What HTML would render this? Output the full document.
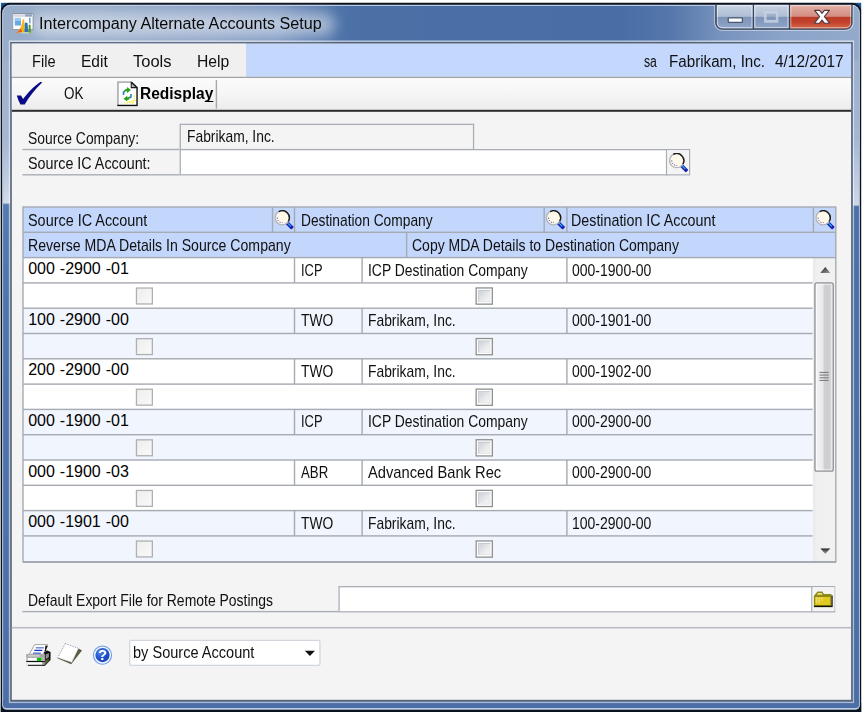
<!DOCTYPE html>
<html><head><meta charset="utf-8"><title>Intercompany Alternate Accounts Setup</title>
<style>
*{box-sizing:border-box;margin:0;padding:0}
html,body{width:862px;height:712px;overflow:hidden;background:#fff}
body{position:relative;font-family:"Liberation Sans",sans-serif;color:#101010}
#root{position:absolute;left:0;top:0;width:8620px;height:7120px;transform:scale(0.1);transform-origin:0 0}
#root div,#root span,#root svg{position:absolute}
#tl{position:absolute;left:0;top:0;width:862px;height:712px}
#tl span{position:absolute}
.t{white-space:pre;transform-origin:0 50%;color:#101010}
.t u{text-decoration-skip-ink:none;text-underline-offset:1.5px}

.ck{border:13.3px solid #b0b0b0;background:linear-gradient(135deg,#eeeeee,#f9f9f9)}
.ck2{border:13.3px solid #8e8f8f;background:#fff}
.ck2 i{position:absolute;left:13.3px;top:13.3px;right:13.3px;bottom:13.3px;background:linear-gradient(135deg,#cdd1d9 0%,#e2e4e8 45%,#f7f7f7 100%);border:13.3px solid #c6cad2;border-right-color:#e6e7ea;border-bottom-color:#e6e7ea}

</style></head><body><div id="root">
<div style="left:9px;top:28px;width:90px;height:90px;background:linear-gradient(135deg,#1e5f98,#0d2c4a)"></div>
<div style="left:8522px;top:28px;width:90px;height:90px;background:linear-gradient(225deg,#1e5f98,#0d2c4a)"></div>
<div style="left:8522px;top:7030px;width:90px;height:90px;background:#0d3556"></div>
<div style="left:9px;top:7030px;width:90px;height:90px;background:#0d3556"></div>
<div style="left:7px;top:28px;width:8605px;height:7112px;background:#0a121e;border-radius:93.3px 93.3px 0 0"></div>
<div style="left:21px;top:48px;width:8578px;height:7050px;background:#bccbe4;border-radius:80px 80px 46.7px 46.7px"></div>
<div style="left:32px;top:61px;width:8557px;height:7020px;border-radius:66.7px 66.7px 33.3px 33.3px;background:linear-gradient(90deg,#98adca 0%,#95abc9 11%,#899fc5 26%,#7b97c0 32%,#6080b2 36%,#4e73a8 39%,#4a70a6 42%,#486ea5 72%,#5577ab 78%,#7893bd 84%,#8aa3c7 91%,#93aacc 100%)"></div>
<div style="left:32px;top:600px;width:70px;height:6460px;background:linear-gradient(180deg,#9fb1cd 0,#a4b6d1 12%,#bccadf 18%,#d3dcea 22.1%,#557aae 22.4%,#4f74aa 40%,#4b6fa6 100%)"></div>
<div style="left:8530px;top:600px;width:59px;height:6460px;background:linear-gradient(180deg,#9cb1cf 0,#a3b7d3 12%,#bccadf 18%,#ccd7e8 22.4%,#4c71a9 22.7%,#4a6ea6 100%)"></div>
<div style="left:32px;top:7000px;width:8557px;height:81px;background:#4a6ea5;border-radius:0 0 33.3px 33.3px"></div>
<div style="left:88px;top:404px;width:8453px;height:6627px;background:rgba(255,255,255,.55)"></div>
<div style="left:102px;top:420px;width:8426px;height:6597px;background:#54627a"></div>
<div style="left:118px;top:437px;width:8393px;height:6561px;background:#f4f4f4"></div>
<div style="left:118px;top:437px;width:8393px;height:332px;background:#c4d7fc"></div>
<div style="left:118px;top:437px;width:2342px;height:332px;background:#f0f0f0"></div>
<div style="left:118px;top:768.3px;width:8393px;height:13.3px;background:#a2a3a2"></div>
<div style="left:118px;top:781px;width:8393px;height:320px;background:linear-gradient(180deg,#fbfbfb 0%,#f7f7f7 40%,#ececec 100%)"></div>
<div style="left:118px;top:1098px;width:8393px;height:20px;background:#2e2e2e"></div>
<div style="left:320px;top:135px;width:3030px;height:220px;background:rgba(255,255,255,.5);border-radius:106.7px;filter:blur(69.3px)"></div>
<div style="left:7139px;top:49px;width:1400px;height:262px;background:rgba(255,255,255,.42);border-radius:0 0 86.7px 86.7px"></div>
<div style="left:7152px;top:49px;width:1374px;height:249px;background:#36425a;border-radius:0 0 73.3px 73.3px"></div>
<div style="left:7167px;top:49px;width:360px;height:235px;border-radius:0 0 0 53.3px;background:linear-gradient(180deg,#c8d3e3 0%,#afbed5 49%,#7d94b8 51%,#8ea6c8 100%);box-shadow:inset 0 0 0 13.3px rgba(255,255,255,.5)"></div>
<div style="left:7541px;top:49px;width:346px;height:235px;background:linear-gradient(180deg,#c8d3e3 0%,#afbed5 49%,#7d94b8 51%,#8ea6c8 100%);box-shadow:inset 0 0 0 13.3px rgba(255,255,255,.5)"></div>
<div style="left:7901px;top:49px;width:612px;height:235px;border-radius:0 0 53.3px 0;background:linear-gradient(180deg,#e4b1a8 0%,#d38c80 49%,#bb3a27 51%,#c4432c 75%,#d4694c 100%);box-shadow:inset 0 0 0 13.3px rgba(255,255,255,.42)"></div>
<div style="left:7276px;top:172px;width:154px;height:58px;background:#fff;border:13.3px solid #4a5872;border-radius:13.3px"></div>
<div style="left:7640px;top:105px;width:144px;height:122px;border:26.7px solid #c6d1e3;border-top-width:32px;background:rgba(130,152,188,.5);opacity:.85"></div>
<svg style="left:8120px;top:90px;width:200px;height:160px" viewBox="0 0 20 16"><path d="M2.600 1.400h5l2.400 3 2.400-3h5l-5 6.200 5.200 6.600h-5.200l-2.400-3.200-2.400 3.200H2.400l5.200-6.600z" fill="#fff" stroke="#4e3a40" stroke-width="1.100" stroke-linejoin="round"/></svg>
<svg style="left:122px;top:127px;width:220px;height:225px" viewBox="0 0 22 22.5"><rect x="0.5" y="0.8" width="20.4" height="16.2" fill="#fdfdfd" stroke="#8f949c" stroke-width="1"/><rect x="1.2" y="1.5" width="19" height="2.6" fill="#d5dae2"/><rect x="13" y="1.6" width="6.8" height="2.2" fill="#8ea0c0"/><rect x="2.6" y="5.2" width="6.2" height="7.6" fill="#6aa6e0"/><rect x="2.6" y="5.2" width="6.2" height="3" fill="#9ccaf0"/><rect x="16.8" y="5" width="1.6" height="5.6" fill="#6aa6e0"/><path d="M3.6 20.2C8 18.6 9.6 13 10.6 6.6h1.4l.4 12.6z" fill="#f7b611"/><path d="M3.6 20.2c2.6-.9 4.2-2.6 5.2-4.8l1 4.2z" fill="#e8561c"/><path d="M12.4 19.4V11c.6-1.6 2.4-1.800 3-.2l.6 8.800z" fill="#2e74b5"/><path d="M16.2 20.6l.4-8c.3-1 1.500-1 1.700 0l.4 8.600z" fill="#4f9a1c"/><path d="M3.6 20.2l9-1 6 .6-.2 1.200z" fill="#cfe6b0" opacity=".8"/></svg>
<svg style="left:150px;top:800px;width:300px;height:270px" viewBox="0 0 30 27"><path d="M1.800 15.600L6 15.400L8.200 19C12.500 13 19 6 25.700 1.700L27.200 2.600C20.500 9 14 17 9.700 24.400L5.400 24.400L3.300 20z" fill="#0a0a86"/></svg>
<svg style="left:1165px;top:812px;width:223px;height:254px" viewBox="0 0 21.5 24.5" preserveAspectRatio="none"><path d="M1.400 .8H14.200L19.800 6.200V23.400H1.400z" fill="#fff"/><path d="M1.400 23.400V.8H14.200" fill="none" stroke="#9c9c9c" stroke-width="1.300"/><path d="M14.200 .8L19.800 6.200V23.400H.8" fill="none" stroke="#0c0c0c" stroke-width="1.300"/><path d="M14.200 1.200V6.200H19.600z" fill="#b8b8b8" stroke="#1a1a1a" stroke-width="1"/><path d="M10.200 5.600l3.600 2.800-3.600 2.900V9.600c-1.400 0-2.500.5-3 1.400 0-2.400 1.200-3.700 3-3.800z" fill="#27a016"/><path d="M10.400 19.700l-3.600-2.800 3.600-2.900v1.700c1.400 0 2.500-.5 3-1.400 0 2.400-1.200 3.700-3 3.800z" fill="#27a016"/><path d="M6.800 13.200V10.400l1.400-.8" fill="none" stroke="#2a82aa" stroke-width="1.500"/><path d="M14 12.400v2.800l-1.400.8" fill="none" stroke="#2a82aa" stroke-width="1.500"/><path d="M16.600 14.400h1.200M16.800 17h1.200M15.200 18.800h1.200m1 0h1M11.500 19.600h1.200m1 0h1.200M7.600 21h1.200m1.200 0h1.200m1.300 0h1.200m1.200 0h1.200M16 20h1" stroke="#f2f020" stroke-width="1.200"/></svg>
<div style="left:2157.3px;top:800px;width:13.3px;height:286px;background:#a9a9a9"></div>
<div style="left:224px;top:1488.3px;width:1576px;height:13.3px;background:#a9adb5"></div>
<div style="left:224px;top:1741.3px;width:1576px;height:13.3px;background:#a9adb5"></div>
<div style="left:1796px;top:1237px;width:2946px;height:265px;border:13.3px solid #a9adb5;background:#f4f4f4"></div>
<div style="left:1796px;top:1490px;width:5106px;height:265px;border:13.3px solid #a9adb5;background:#fff"></div>
<div style="left:6659.3px;top:1490px;width:13.3px;height:264px;background:#a9adb5"></div>
<div style="left:6673px;top:1503px;width:216px;height:238px;background:#f4f4f4"></div>
<svg style="left:6690px;top:1529px;width:195px;height:195px" viewBox="0 0 19.5 19.5"><path d="M12 12.200l4.800 4.800" stroke="#1c1cb4" stroke-width="3.600" stroke-linecap="square"/><path d="M12.800 12.600l3.600 3.600" stroke="#22c0e8" stroke-width="1.200"/><circle cx="7.700" cy="7.700" r="7.100" fill="#fff9ea" stroke="#b4b4b4" stroke-width="1.300"/><path d="M4.300 1.500A7.100 7.100 0 0 1 13.900 11.200" fill="none" stroke="#1a1a1a" stroke-width="1.400"/><path d="M2.700 7.500l.3 2.200 1.600 2 2 .9 1.600-.1" fill="none" stroke="#5a5ad8" stroke-width="1" stroke-dasharray="1.300 1.300"/></svg>
<div style="left:230px;top:2070px;width:8128px;height:506px;background:#c3d6fc"></div>
<div style="left:230px;top:2576px;width:8128px;height:3044px;background:#fff"></div>
<div style="left:230px;top:3082px;width:7904px;height:506px;background:#f1f5fd"></div>
<div style="left:230px;top:4094px;width:7904px;height:506px;background:#f1f5fd"></div>
<div style="left:230px;top:5106px;width:7904px;height:514px;background:#f1f5fd"></div>
<div style="left:8130px;top:2576px;width:228px;height:3044px;background:linear-gradient(90deg,#e9e9ea 0,#f0f0f0 40px,#f1f1f1 100%)"></div>
<div style="left:230px;top:2063.3px;width:8128px;height:13.3px;background:#a6aab2"></div>
<div style="left:230px;top:2316.3px;width:8128px;height:13.3px;background:#a6aab2"></div>
<div style="left:230px;top:2569.3px;width:8128px;height:13.3px;background:#a6aab2"></div>
<div style="left:230px;top:2822.3px;width:7896px;height:13.3px;background:#a6aab2"></div>
<div style="left:230px;top:3075.3px;width:7896px;height:13.3px;background:#a6aab2"></div>
<div style="left:230px;top:3328.3px;width:7896px;height:13.3px;background:#a6aab2"></div>
<div style="left:230px;top:3581.3px;width:7896px;height:13.3px;background:#a6aab2"></div>
<div style="left:230px;top:3834.3px;width:7896px;height:13.3px;background:#a6aab2"></div>
<div style="left:230px;top:4087.3px;width:7896px;height:13.3px;background:#a6aab2"></div>
<div style="left:230px;top:4340.3px;width:7896px;height:13.3px;background:#a6aab2"></div>
<div style="left:230px;top:4593.3px;width:7896px;height:13.3px;background:#a6aab2"></div>
<div style="left:230px;top:4846.3px;width:7896px;height:13.3px;background:#a6aab2"></div>
<div style="left:230px;top:5099.3px;width:7896px;height:13.3px;background:#a6aab2"></div>
<div style="left:230px;top:5352.3px;width:7896px;height:13.3px;background:#a6aab2"></div>
<div style="left:230px;top:5610px;width:8128px;height:20px;background:#a6aab2"></div>
<div style="left:223.3px;top:2064px;width:13.3px;height:3562px;background:#a6aab2"></div>
<div style="left:8351.3px;top:2064px;width:13.3px;height:3562px;background:#a6aab2"></div>
<div style="left:2718.3px;top:2070px;width:13.3px;height:253px;background:#a6aab2"></div>
<div style="left:2938.3px;top:2070px;width:13.3px;height:253px;background:#a6aab2"></div>
<div style="left:5435.3px;top:2070px;width:13.3px;height:253px;background:#a6aab2"></div>
<div style="left:5662.3px;top:2070px;width:13.3px;height:253px;background:#a6aab2"></div>
<div style="left:8127.3px;top:2070px;width:13.3px;height:253px;background:#a6aab2"></div>
<div style="left:4059.3px;top:2323px;width:13.3px;height:253px;background:#a6aab2"></div>
<svg style="left:2745px;top:2101px;width:195px;height:195px" viewBox="0 0 19.5 19.5"><path d="M12 12.200l4.800 4.800" stroke="#1c1cb4" stroke-width="3.600" stroke-linecap="square"/><path d="M12.800 12.600l3.600 3.600" stroke="#22c0e8" stroke-width="1.200"/><circle cx="7.700" cy="7.700" r="7.100" fill="#fff9ea" stroke="#b4b4b4" stroke-width="1.300"/><path d="M4.300 1.500A7.100 7.100 0 0 1 13.900 11.200" fill="none" stroke="#1a1a1a" stroke-width="1.400"/><path d="M2.700 7.500l.3 2.200 1.600 2 2 .9 1.600-.1" fill="none" stroke="#5a5ad8" stroke-width="1" stroke-dasharray="1.300 1.300"/></svg>
<svg style="left:5458px;top:2101px;width:195px;height:195px" viewBox="0 0 19.5 19.5"><path d="M12 12.200l4.800 4.800" stroke="#1c1cb4" stroke-width="3.600" stroke-linecap="square"/><path d="M12.800 12.600l3.600 3.600" stroke="#22c0e8" stroke-width="1.200"/><circle cx="7.700" cy="7.700" r="7.100" fill="#fff9ea" stroke="#b4b4b4" stroke-width="1.300"/><path d="M4.300 1.500A7.100 7.100 0 0 1 13.900 11.200" fill="none" stroke="#1a1a1a" stroke-width="1.400"/><path d="M2.700 7.500l.3 2.200 1.600 2 2 .9 1.600-.1" fill="none" stroke="#5a5ad8" stroke-width="1" stroke-dasharray="1.300 1.300"/></svg>
<svg style="left:8154px;top:2101px;width:195px;height:195px" viewBox="0 0 19.5 19.5"><path d="M12 12.200l4.800 4.800" stroke="#1c1cb4" stroke-width="3.600" stroke-linecap="square"/><path d="M12.800 12.600l3.600 3.600" stroke="#22c0e8" stroke-width="1.200"/><circle cx="7.700" cy="7.700" r="7.100" fill="#fff9ea" stroke="#b4b4b4" stroke-width="1.300"/><path d="M4.300 1.500A7.100 7.100 0 0 1 13.900 11.200" fill="none" stroke="#1a1a1a" stroke-width="1.400"/><path d="M2.700 7.500l.3 2.200 1.600 2 2 .9 1.600-.1" fill="none" stroke="#5a5ad8" stroke-width="1" stroke-dasharray="1.300 1.300"/></svg>
<div style="left:2938.3px;top:2576px;width:13.3px;height:253px;background:#a6aab2"></div>
<div style="left:3614.3px;top:2576px;width:13.3px;height:253px;background:#a6aab2"></div>
<div style="left:5662.3px;top:2576px;width:13.3px;height:253px;background:#a6aab2"></div>
<div class="ck" style="left:1358px;top:2874px;width:172px;height:172px;"></div>
<div class="ck2" style="left:4755px;top:2873px;width:175px;height:175px;"><i></i></div>
<div style="left:2938.3px;top:3082px;width:13.3px;height:253px;background:#a6aab2"></div>
<div style="left:3614.3px;top:3082px;width:13.3px;height:253px;background:#a6aab2"></div>
<div style="left:5662.3px;top:3082px;width:13.3px;height:253px;background:#a6aab2"></div>
<div class="ck" style="left:1358px;top:3380px;width:172px;height:172px;"></div>
<div class="ck2" style="left:4755px;top:3379px;width:175px;height:175px;"><i></i></div>
<div style="left:2938.3px;top:3588px;width:13.3px;height:253px;background:#a6aab2"></div>
<div style="left:3614.3px;top:3588px;width:13.3px;height:253px;background:#a6aab2"></div>
<div style="left:5662.3px;top:3588px;width:13.3px;height:253px;background:#a6aab2"></div>
<div class="ck" style="left:1358px;top:3886px;width:172px;height:172px;"></div>
<div class="ck2" style="left:4755px;top:3885px;width:175px;height:175px;"><i></i></div>
<div style="left:2938.3px;top:4094px;width:13.3px;height:253px;background:#a6aab2"></div>
<div style="left:3614.3px;top:4094px;width:13.3px;height:253px;background:#a6aab2"></div>
<div style="left:5662.3px;top:4094px;width:13.3px;height:253px;background:#a6aab2"></div>
<div class="ck" style="left:1358px;top:4392px;width:172px;height:172px;"></div>
<div class="ck2" style="left:4755px;top:4391px;width:175px;height:175px;"><i></i></div>
<div style="left:2938.3px;top:4600px;width:13.3px;height:253px;background:#a6aab2"></div>
<div style="left:3614.3px;top:4600px;width:13.3px;height:253px;background:#a6aab2"></div>
<div style="left:5662.3px;top:4600px;width:13.3px;height:253px;background:#a6aab2"></div>
<div class="ck" style="left:1358px;top:4898px;width:172px;height:172px;"></div>
<div class="ck2" style="left:4755px;top:4897px;width:175px;height:175px;"><i></i></div>
<div style="left:2938.3px;top:5106px;width:13.3px;height:253px;background:#a6aab2"></div>
<div style="left:3614.3px;top:5106px;width:13.3px;height:253px;background:#a6aab2"></div>
<div style="left:5662.3px;top:5106px;width:13.3px;height:253px;background:#a6aab2"></div>
<div class="ck" style="left:1358px;top:5404px;width:172px;height:172px;"></div>
<div class="ck2" style="left:4755px;top:5403px;width:175px;height:175px;"><i></i></div>
<div style="left:8143px;top:2822px;width:196px;height:1896px;border:13.3px solid #909296;border-radius:26.7px;background:linear-gradient(90deg,#f4f4f4 0%,#e9e9ea 42%,#d0d0d3 52%,#cdcdd0 75%,#dbdbdd 100%);box-shadow:inset 0 0 0 13.3px rgba(255,255,255,.6)"></div>
<div style="left:8195px;top:3718.5px;width:93px;height:11px;background:#7d7f84"></div>
<div style="left:8195px;top:3745.2px;width:93px;height:11px;background:#7d7f84"></div>
<div style="left:8195px;top:3771.9px;width:93px;height:11px;background:#7d7f84"></div>
<div style="left:8195px;top:3798.6px;width:93px;height:11px;background:#7d7f84"></div>
<svg style="left:8202px;top:2668px;width:102px;height:62px" viewBox="0 0 10.2 6.2"><defs><linearGradient id="ag" x1="0" y1="0" x2="1" y2="1"><stop offset="0" stop-color="#1e1e1e"/><stop offset="1" stop-color="#a0a0a0"/></linearGradient><linearGradient id="ag2" x1="0" y1="0" x2="0" y2="1"><stop offset="0" stop-color="#202020"/><stop offset="1" stop-color="#a8a8a8"/></linearGradient></defs><path d="M0 6.200L5.100 .3l5.100 5.900z" fill="url(#ag)"/></svg>
<svg style="left:8202px;top:5482px;width:102px;height:60px" viewBox="0 0 10.2 6"><path d="M0 0L5.100 5.800l5.100-5.800z" fill="url(#ag2)"/></svg>
<div style="left:224px;top:6109.3px;width:3166px;height:13.3px;background:#a9adb5"></div>
<div style="left:3384px;top:5860px;width:4968px;height:265px;border:13.3px solid #a9adb5;background:#fff"></div>
<div style="left:8112.3px;top:5860px;width:13.3px;height:260px;background:#a9adb5"></div>
<div style="left:8126px;top:5871px;width:220px;height:238px;background:#f4f4f4"></div>
<svg style="left:8129px;top:5905px;width:200px;height:170px" viewBox="0 0 20 17"><path d="M1 15.600V5.200L4.600 1h4.800l1.600 2.600h7.600V15.600z" fill="#8c8a18"/><path d="M2.200 14.400V6.400h15.200v8z" fill="#e2c922"/><path d="M3.800 4.200l1.400-1.800h3.600l.8 1.800z" fill="#efe27a"/><path d="M3 7.600h8m-8 2h6.500m-6.500 2h5" stroke="#f5ec9a" stroke-width="1.100" stroke-dasharray="1.300 1.300"/><path d="M1 16h18.200V5" fill="none" stroke="#141400" stroke-width="1.300"/></svg>
<div style="left:118px;top:6269px;width:8393px;height:16px;background:#b9bcc2"></div>
<svg style="left:220px;top:6400px;width:360px;height:300px" viewBox="0 0 36 30"><path d="M12.700 4.600H25.700L21.100 14.200H7.200z" fill="#fff" stroke="#9c9c9c" stroke-width=".9"/><path d="M13.900 7.800h8" stroke="#6a80d2" stroke-width="1.400"/><path d="M12.300 10.400h8" stroke="#1232c4" stroke-width="1.300"/><path d="M11 13.200h7.800" stroke="#5a74d0" stroke-width="1.400"/><path d="M23.400 5.600l2.400.3-1.600 3.600 .2 2-1.600-.4 .2-2.200z" fill="#161616"/><path d="M22.200 12l3.200-1.400 3.200 1.500-.1 7.900-5.500 5.800h-1z" fill="#0c0c0c"/><path d="M23.600 14.400l3.300-1.500v4.400l-3.300 2.200z" fill="#8e8e8e"/><path d="M22.600 20.800l4.300-2.200v2.400l-4 4.200z" fill="#5c5a34"/><rect x="4.400" y="14.200" width="18.300" height="11.300" fill="#b0b0b0"/><rect x="4.300" y="20.900" width="18.400" height="1.200" fill="#101010"/><rect x="6" y="24.600" width="16.800" height="1.200" fill="#101010"/><rect x="4.300" y="22" width="1.600" height="3" fill="#f4f4f4"/><rect x="4.400" y="14.300" width="18.200" height="2.900" fill="#a6a6a6"/><rect x="6" y="15.200" width="11.500" height="1.300" fill="#d8d8d8"/><rect x="4.800" y="17.300" width="17.800" height="3.600" fill="#b4b4b4"/><rect x="5.800" y="18" width="9" height="2.500" fill="#fff"/><rect x="15" y="17.900" width="4.200" height="3" fill="#00c200"/><rect x="5.800" y="22.300" width="14.600" height="2.300" fill="#fff"/><rect x="20.400" y="22.300" width="2.200" height="2.300" fill="#9a9a9a"/></svg>
<svg style="left:560px;top:6420px;width:280px;height:240px" viewBox="0 0 28 24"><path d="M1.400 16.200l13.800 6 10.800-13.800-3-1.600z" fill="#5e5c3c"/><path d="M9.100 1.600L22.500 6.400 15.800 20.500 1.700 15.700z" fill="#fff" stroke="#7f86a6" stroke-width=".8" stroke-dasharray="1.400 1.200"/></svg>
<svg style="left:920px;top:6446px;width:210px;height:210px" viewBox="0 0 21 21"><defs><radialGradient id="hg" cx=".35" cy=".3" r=".85"><stop offset="0" stop-color="#4f86e6"/><stop offset=".55" stop-color="#1f50c8"/><stop offset="1" stop-color="#1a3fa8"/></radialGradient></defs><circle cx="10.500" cy="10.500" r="9.100" fill="#eef4fe" stroke="#6f9cec" stroke-width="1.100"/><circle cx="10.500" cy="10.500" r="7.100" fill="url(#hg)"/><text x="10.500" y="15.900" text-anchor="middle" font-family="Liberation Sans,sans-serif" font-weight="700" font-size="15" fill="#fff">?</text></svg>
<div style="left:1290px;top:6398px;width:1916px;height:262px;border:13.3px solid #d2d6dd;background:#fff;border-radius:20px"></div>
<svg style="left:3046px;top:6504px;width:106px;height:56px" viewBox="0 0 10.6 5.6"><path d="M0 0h10.600L5.300 5.600z" fill="#111"/></svg>
</div>
<div id="tl">
<span class="t" style="left:39.4px;top:14.72px;font-size:16px;line-height:17.87px;height:17.87px;color:#0a0a0a;transform:scaleX(1.009);">Intercompany Alternate Accounts Setup</span>
<span class="t" style="left:32px;top:52.8px;font-size:15.8px;line-height:17.65px;height:17.65px;transform:scaleX(0.927);">File</span>
<span class="t" style="left:81px;top:52.8px;font-size:15.8px;line-height:17.65px;height:17.65px;transform:scaleX(0.984);">Edit</span>
<span class="t" style="left:133.4px;top:52.8px;font-size:15.8px;line-height:17.65px;height:17.65px;transform:scaleX(1.044);">Tools</span>
<span class="t" style="left:197.1px;top:52.8px;font-size:15.8px;line-height:17.65px;height:17.65px;transform:scaleX(0.994);">Help</span>
<span class="t" style="left:644px;top:52.8px;font-size:15.8px;line-height:17.65px;height:17.65px;transform:scaleX(0.773);">sa</span>
<span class="t" style="left:668.5px;top:52.8px;font-size:15.8px;line-height:17.65px;height:17.65px;transform:scaleX(0.960);">Fabrikam, Inc.</span>
<span class="t" style="left:775.3px;top:52.8px;font-size:15.8px;line-height:17.65px;height:17.65px;transform:scaleX(0.977);">4/12/2017</span>
<span class="t" style="left:64px;top:85.32px;font-size:16px;line-height:17.87px;height:17.87px;transform:scaleX(0.839);">OK</span>
<span class="t" style="left:139.9px;top:85.48px;font-size:15.6px;line-height:17.43px;height:17.43px;font-weight:700;color:#000;transform:scaleX(0.995);">Redispla<u>y</u></span>
<span class="t" style="left:28px;top:129.81px;font-size:15.9px;line-height:17.76px;height:17.76px;transform:scaleX(0.874);">Source Company:</span>
<span class="t" style="left:28px;top:155.11px;font-size:15.9px;line-height:17.76px;height:17.76px;transform:scaleX(0.901);">Source IC Account:</span>
<span class="t" style="left:187px;top:128.31px;font-size:15.9px;line-height:17.76px;height:17.76px;transform:scaleX(0.871);">Fabrikam, Inc.</span>
<span class="t" style="left:28.4px;top:212.41px;font-size:15.9px;line-height:17.76px;height:17.76px;transform:scaleX(0.907);">Source IC Account</span>
<span class="t" style="left:300.9px;top:212.41px;font-size:15.9px;line-height:17.76px;height:17.76px;transform:scaleX(0.866);">Destination Company</span>
<span class="t" style="left:570.7px;top:212.41px;font-size:15.9px;line-height:17.76px;height:17.76px;transform:scaleX(0.898);">Destination IC Account</span>
<span class="t" style="left:28.4px;top:237.01px;font-size:15.9px;line-height:17.76px;height:17.76px;transform:scaleX(0.888);">Reverse MDA Details In Source Company</span>
<span class="t" style="left:412.3px;top:237.01px;font-size:15.9px;line-height:17.76px;height:17.76px;transform:scaleX(0.881);">Copy MDA Details to Destination Company</span>
<span class="t" style="left:28.2px;top:260.12px;font-size:16px;line-height:17.87px;height:17.87px;color:#000;word-spacing:0.5px">000 -2900 -01</span>
<span class="t" style="left:300.9px;top:261.51px;font-size:15.9px;line-height:17.76px;height:17.76px;transform:scaleX(0.811);">ICP</span>
<span class="t" style="left:368.3px;top:261.51px;font-size:15.9px;line-height:17.76px;height:17.76px;transform:scaleX(0.875);">ICP Destination Company</span>
<span class="t" style="left:572.4px;top:261.51px;font-size:15.9px;line-height:17.76px;height:17.76px;transform:scaleX(0.881);">000-1900-00</span>
<span class="t" style="left:28.2px;top:310.72px;font-size:16px;line-height:17.87px;height:17.87px;color:#000;word-spacing:0.5px">100 -2900 -00</span>
<span class="t" style="left:300.9px;top:312.11px;font-size:15.9px;line-height:17.76px;height:17.76px;transform:scaleX(0.871);">TWO</span>
<span class="t" style="left:368.3px;top:312.11px;font-size:15.9px;line-height:17.76px;height:17.76px;transform:scaleX(0.871);">Fabrikam, Inc.</span>
<span class="t" style="left:572.4px;top:312.11px;font-size:15.9px;line-height:17.76px;height:17.76px;transform:scaleX(0.881);">000-1901-00</span>
<span class="t" style="left:28.2px;top:361.32px;font-size:16px;line-height:17.87px;height:17.87px;color:#000;word-spacing:0.5px">200 -2900 -00</span>
<span class="t" style="left:300.9px;top:362.71px;font-size:15.9px;line-height:17.76px;height:17.76px;transform:scaleX(0.871);">TWO</span>
<span class="t" style="left:368.3px;top:362.71px;font-size:15.9px;line-height:17.76px;height:17.76px;transform:scaleX(0.871);">Fabrikam, Inc.</span>
<span class="t" style="left:572.4px;top:362.71px;font-size:15.9px;line-height:17.76px;height:17.76px;transform:scaleX(0.881);">000-1902-00</span>
<span class="t" style="left:28.2px;top:411.92px;font-size:16px;line-height:17.87px;height:17.87px;color:#000;word-spacing:0.5px">000 -1900 -01</span>
<span class="t" style="left:300.9px;top:413.31px;font-size:15.9px;line-height:17.76px;height:17.76px;transform:scaleX(0.811);">ICP</span>
<span class="t" style="left:368.3px;top:413.31px;font-size:15.9px;line-height:17.76px;height:17.76px;transform:scaleX(0.875);">ICP Destination Company</span>
<span class="t" style="left:572.4px;top:413.31px;font-size:15.9px;line-height:17.76px;height:17.76px;transform:scaleX(0.881);">000-2900-00</span>
<span class="t" style="left:28.2px;top:462.52px;font-size:16px;line-height:17.87px;height:17.87px;color:#000;word-spacing:0.5px">000 -1900 -03</span>
<span class="t" style="left:300.9px;top:463.91px;font-size:15.9px;line-height:17.76px;height:17.76px;transform:scaleX(0.832);">ABR</span>
<span class="t" style="left:368.3px;top:463.91px;font-size:15.9px;line-height:17.76px;height:17.76px;transform:scaleX(0.925);">Advanced Bank Rec</span>
<span class="t" style="left:572.4px;top:463.91px;font-size:15.9px;line-height:17.76px;height:17.76px;transform:scaleX(0.881);">000-2900-00</span>
<span class="t" style="left:28.2px;top:513.12px;font-size:16px;line-height:17.87px;height:17.87px;color:#000;word-spacing:0.5px">000 -1901 -00</span>
<span class="t" style="left:300.9px;top:514.51px;font-size:15.9px;line-height:17.76px;height:17.76px;transform:scaleX(0.871);">TWO</span>
<span class="t" style="left:368.3px;top:514.51px;font-size:15.9px;line-height:17.76px;height:17.76px;transform:scaleX(0.871);">Fabrikam, Inc.</span>
<span class="t" style="left:572.4px;top:514.51px;font-size:15.9px;line-height:17.76px;height:17.76px;transform:scaleX(0.881);">100-2900-00</span>
<span class="t" style="left:28.2px;top:592.21px;font-size:15.9px;line-height:17.76px;height:17.76px;transform:scaleX(0.878);">Default Export File for Remote Postings</span>
<span class="t" style="left:133px;top:644.31px;font-size:15.9px;line-height:17.76px;height:17.76px;transform:scaleX(0.916);">by Source Account</span>
</div></body></html>
